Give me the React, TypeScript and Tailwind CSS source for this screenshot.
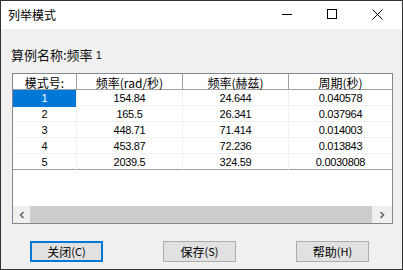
import React from 'react';

const rows = [
  ['1', '154.84', '24.644', '0.040578'],
  ['2', '165.5', '26.341', '0.037964'],
  ['3', '448.71', '71.414', '0.014003'],
  ['4', '453.87', '72.236', '0.013843'],
  ['5', '2039.5', '324.59', '0.0030808'],
];

const headers = ['模式号:', '频率(rad/秒)', '频率(赫兹)', '周期(秒)'];

const cjk = "font-['Noto_Sans_CJK_SC',sans-serif]";
const num = "font-['Liberation_Sans','Noto_Sans_CJK_SC',sans-serif]";

const Button = ({ label, hot, focused }: { label: string; hot: string; focused?: boolean }) => (
  <div
    className={`w-[73px] h-[21px] flex items-center justify-center bg-[#e1e1e1] text-[12px] text-black ${cjk} ${
      focused ? 'border-2 border-[#0078d7]' : 'border border-[#adadad]'
    }`}
  >
    {label}
    <span className="text-[11px]">({hot})</span>
  </div>
);

export default function App() {
  return (
    <div className="w-[403px] h-[270px] border border-[#333] bg-[#f0f0f0] flex flex-col overflow-hidden">
      {/* Title bar */}
      <div className="h-[28px] bg-white flex items-center shrink-0">
        <span className={`ml-[7px] text-[12px] text-black ${cjk}`}>列举模式</span>
        <div className="ml-auto flex items-center">
          <svg width="46" height="28" viewBox="0 0 46 28">
            <line x1="18" y1="13.5" x2="28" y2="13.5" stroke="#000" strokeWidth="1" />
          </svg>
          <svg width="46" height="28" viewBox="0 0 46 28">
            <rect x="17.5" y="8.5" width="9" height="9" fill="none" stroke="#000" strokeWidth="1" />
          </svg>
          <svg width="46" height="28" viewBox="0 0 46 28">
            <path d="M16.5 8.5 L26.5 18.5 M26.5 8.5 L16.5 18.5" stroke="#000" strokeWidth="1" />
          </svg>
        </div>
      </div>

      {/* Name label */}
      <div className={`mt-[18px] ml-[10px] h-[16px] flex items-center text-[13px] text-[#111] ${cjk}`}>
        算例名称:频率<span className={`${num} text-[11px] ml-[3px]`}>1</span>
      </div>

      {/* List view */}
      <div className="mt-[10px] ml-[11px] w-[381px] h-[151px] border border-[#828790] bg-white flex flex-col">
        <div className="grid grid-cols-[64px_106px_106px_103px] h-[16px] border-b border-[#a0a0a0]">
          {headers.map((h, i) => (
            <div
              key={i}
              className={`flex items-center justify-center text-[12px] text-black ${cjk} ${
                i < 3 ? 'border-r border-[#a0a0a0]' : ''
              }`}
            >
              {h}
            </div>
          ))}
        </div>
        {rows.map((r, ri) => (
          <div
            key={ri}
            className={`grid grid-cols-[64px_106px_106px_103px] h-[16px] ${
              ri === rows.length - 1 ? 'border-b border-[#a0a0a0]' : 'border-b border-[#f0f0f0]'
            }`}
          >
            {r.map((c, ci) => (
              <div
                key={ci}
                className={`flex items-center justify-center text-[11px] tracking-[-0.3px] ${num} ${
                  ci < 3 ? 'border-r border-[#f0f0f0]' : ''
                } ${ri === 0 && ci === 0 ? 'bg-[#0078d7] text-white' : 'text-black'}`}
              >
                {c}
              </div>
            ))}
          </div>
        ))}
        <div className="flex-1" />
        {/* Horizontal scrollbar */}
        <div className="h-[17px] bg-[#f0f0f0] flex items-center">
          <div className="w-[17px] h-full flex items-center justify-center">
            <svg width="8" height="8" viewBox="0 0 8 8">
              <path d="M5.5 1 L2.5 4 L5.5 7" fill="none" stroke="#606060" strokeWidth="1.5" />
            </svg>
          </div>
          <div className="w-[342px] h-full bg-[#cdcdcd]" />
          <div className="flex-1 h-full flex items-center justify-center">
            <svg width="8" height="8" viewBox="0 0 8 8">
              <path d="M2.5 1 L5.5 4 L2.5 7" fill="none" stroke="#606060" strokeWidth="1.5" />
            </svg>
          </div>
        </div>
      </div>

      {/* Buttons */}
      <div className="mt-[17px] ml-[29px] flex gap-[60px]">
        <Button label="关闭" hot="C" focused />
        <Button label="保存" hot="S" />
        <Button label="帮助" hot="H" />
      </div>
    </div>
  );
}
